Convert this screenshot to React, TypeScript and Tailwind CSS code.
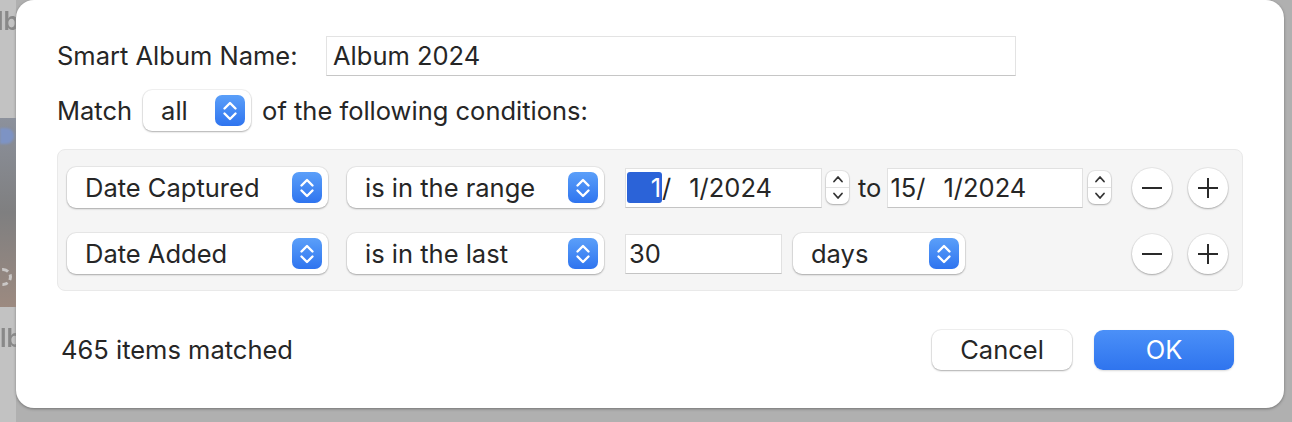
import React from "react";

const font = { fontFamily: "Inter, 'Noto Sans', sans-serif" };

function Chevrons({ color = "white" }: { color?: string }) {
  return (
    <svg width="16" height="24" viewBox="0 0 16 24" fill="none">
      <path d="M2.5 9.5 L8 4 L13.5 9.5" stroke={color} strokeWidth="2.4" strokeLinecap="round" strokeLinejoin="round" />
      <path d="M2.5 14.5 L8 20 L13.5 14.5" stroke={color} strokeWidth="2.4" strokeLinecap="round" strokeLinejoin="round" />
    </svg>
  );
}

function Popup({ label, w }: { label: string; w: string }) {
  return (
    <div
      className={`${w} relative flex h-[41px] shrink-0 items-center rounded-[9px] bg-white pl-[18px] shadow-[0_0_0_1px_rgba(0,0,0,0.05),0_1px_2px_rgba(0,0,0,0.28)]`}
    >
      <span className="text-[25.5px] leading-none text-[#262626]">{label}</span>
      <div className="absolute right-[6px] top-[5px] flex h-[31px] w-[30px] items-center justify-center rounded-[7px] bg-gradient-to-b from-[#5b9ff9] to-[#2f74ef]">
        <Chevrons />
      </div>
    </div>
  );
}

function Stepper() {
  return (
    <div className="flex h-[33px] w-[23px] shrink-0 flex-col items-center rounded-[7px] bg-white shadow-[0_0_0_1px_rgba(0,0,0,0.06),0_1px_2px_rgba(0,0,0,0.25)]">
      <div className="flex h-1/2 w-full items-center justify-center border-b border-[#e2e2e2]">
        <svg width="12" height="10" viewBox="0 0 12 10" fill="none">
          <path d="M2 7.5 L6 3 L10 7.5" stroke="#333" strokeWidth="1.8" strokeLinecap="round" strokeLinejoin="round" />
        </svg>
      </div>
      <div className="flex h-1/2 w-full items-center justify-center">
        <svg width="12" height="10" viewBox="0 0 12 10" fill="none">
          <path d="M2 2.5 L6 7 L10 2.5" stroke="#333" strokeWidth="1.8" strokeLinecap="round" strokeLinejoin="round" />
        </svg>
      </div>
    </div>
  );
}

function Field({ children, w }: { children: React.ReactNode; w: string }) {
  return (
    <div
      className={`${w} flex h-[40px] shrink-0 items-center border border-[#e1e1e1] border-b-[#c4c4c4] bg-white text-[25.5px] leading-none text-[#262626]`}
    >
      {children}
    </div>
  );
}

function RoundButton({ plus }: { plus?: boolean }) {
  return (
    <div className="flex h-[40px] w-[40px] shrink-0 items-center justify-center rounded-full bg-white shadow-[0_0_0_1px_rgba(0,0,0,0.05),0_1px_2px_rgba(0,0,0,0.28)]">
      <svg width="22" height="22" viewBox="0 0 22 22">
        <path d="M1 11 H21" stroke="#2a2a2a" strokeWidth="2" />
        {plus && <path d="M11 1 V21" stroke="#2a2a2a" strokeWidth="2" />}
      </svg>
    </div>
  );
}

export default function App() {
  return (
    <div className="flex h-[422px] w-[1292px] overflow-hidden bg-[#b0b0b0]" style={font}>
      <div className="flex w-[16px] shrink-0 flex-col overflow-hidden bg-[#c2c2c2]">
        <div className="ml-[-3px] mt-[6px] h-[30px] text-[25px] font-semibold leading-[30px] text-[#888] blur-[0.6px]">lb</div>
        <div className="relative mt-[82px] h-[189px] bg-gradient-to-b from-[#8c919c] via-[#7f7f80] to-[#9c8a80]">
          <div className="absolute left-0 top-[10px] h-[16px] w-[14px] rounded-r-full bg-[#7d93c4] blur-[1px]" />
          <div className="absolute left-[-6px] top-[150px] h-[18px] w-[18px] rounded-full border-[3px] border-dashed border-[#d8d8d8] opacity-80" />
        </div>
        <div className="mt-[16px] h-[30px] text-[25px] font-semibold leading-[30px] text-[#888] blur-[0.6px]">lb</div>
      </div>

      <div className="flex h-[408px] w-[1268px] shrink-0 flex-col rounded-[18px] bg-white px-[41px] pt-[36px] shadow-[0_1px_3px_rgba(0,0,0,0.35)]">
        <div className="flex items-center">
          <span className="w-[269px] text-[25.5px] leading-none text-[#262626]">Smart Album Name:</span>
          <div className="flex h-[40px] w-[690px] items-center border border-[#e3e3e3] border-b-[#c6c6c6] pl-[6px] text-[25.5px] leading-none text-[#262626]">
            Album 2024
          </div>
        </div>

        <div className="mt-[14px] flex items-center">
          <span className="text-[25.5px] leading-none text-[#262626]">Match</span>
          <div className="ml-[11px]">
            <Popup label="all" w="w-[108px]" />
          </div>
          <span className="ml-[11px] text-[25.5px] leading-none text-[#262626]">of the following conditions:</span>
        </div>

        <div className="mt-[18px] flex h-[142px] flex-col gap-[25px] rounded-[8px] border border-[#e9e9e9] bg-[#f5f5f5] pl-[9px] pr-[14px] pt-[17px]">
          <div className="flex items-center">
            <Popup label="Date Captured" w="w-[261px]" />
            <div className="ml-[19px]">
              <Popup label="is in the range" w="w-[257px]" />
            </div>
            <div className="ml-[21px]">
              <Field w="w-[197px]">
                <span className="ml-[1px] flex h-[31px] w-[35px] items-center justify-end rounded-[3px] bg-[#2b63d8] pr-[1px] text-white">1</span>
                <span>/</span>
                <span className="ml-[18px]">1/2024</span>
              </Field>
            </div>
            <div className="ml-[4px]">
              <Stepper />
            </div>
            <span className="ml-[9px] text-[25.5px] leading-none text-[#262626]">to</span>
            <div className="ml-[6px]">
              <Field w="w-[196px]">
                <span className="ml-[2px]">15</span>
                <span>/</span>
                <span className="ml-[18px]">1/2024</span>
              </Field>
            </div>
            <div className="ml-[5px]">
              <Stepper />
            </div>
            <div className="ml-auto flex gap-[16px]">
              <RoundButton />
              <RoundButton plus />
            </div>
          </div>

          <div className="flex items-center">
            <Popup label="Date Added" w="w-[261px]" />
            <div className="ml-[19px]">
              <Popup label="is in the last" w="w-[257px]" />
            </div>
            <div className="ml-[21px]">
              <Field w="w-[157px]">
                <span className="ml-[3px]">30</span>
              </Field>
            </div>
            <div className="ml-[11px]">
              <Popup label="days" w="w-[172px]" />
            </div>
            <div className="ml-auto flex gap-[16px]">
              <RoundButton />
              <RoundButton plus />
            </div>
          </div>
        </div>

        <div className="mt-[39px] flex items-center">
          <span className="pl-[4px] text-[25.5px] leading-none text-[#262626]">465 items matched</span>
          <div className="ml-auto mr-[9px] flex gap-[22px]">
            <button className="flex h-[40px] w-[140px] items-center justify-center rounded-[9px] bg-white text-[25.5px] leading-none text-[#262626] shadow-[0_0_0_1px_rgba(0,0,0,0.06),0_1px_2px_rgba(0,0,0,0.28)]">
              Cancel
            </button>
            <button className="flex h-[40px] w-[140px] items-center justify-center rounded-[9px] bg-gradient-to-b from-[#4b90f8] to-[#2f74ee] text-[25.5px] leading-none text-white shadow-[0_1px_2px_rgba(0,0,0,0.15)]">
              OK
            </button>
          </div>
        </div>
      </div>
    </div>
  );
}
